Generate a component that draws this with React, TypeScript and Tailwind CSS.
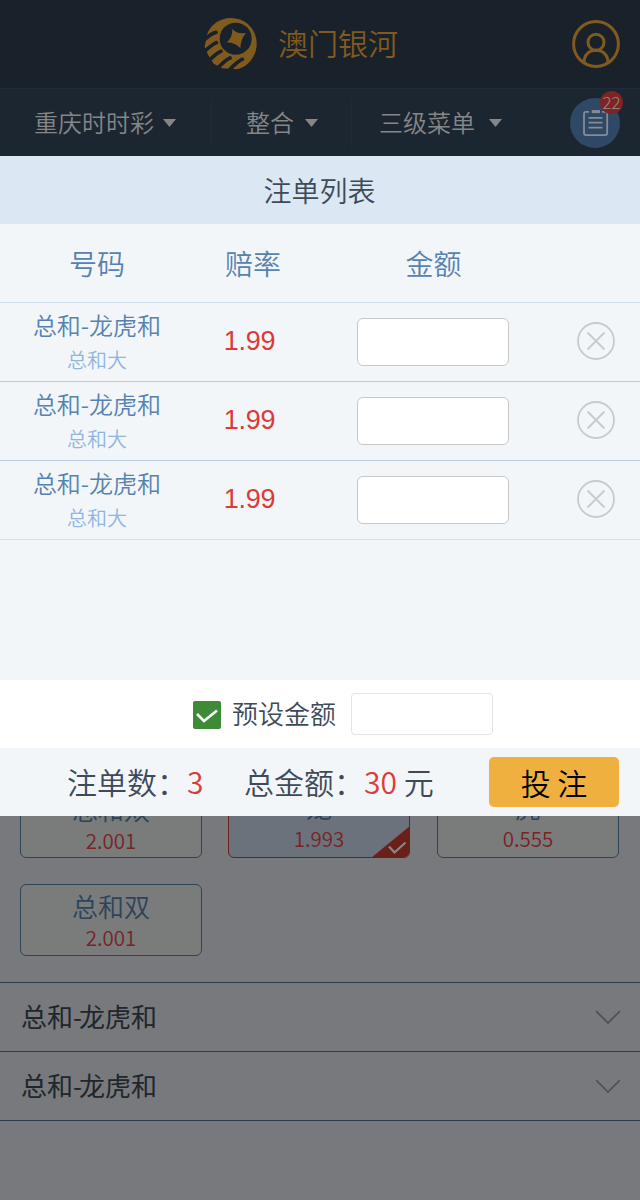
import React from "react";

const rows = [0, 1, 2];

function Logo() {
  return (
    <svg className="h-[54px] w-[55px] shrink-0" viewBox="40 50 165 162">
      <path
        d="M52 103C62 73 90 53 124 53C168 53 201 87 201 130C201 170 172 203 138 207L98 204L72 190L55 163L45 139Z"
        fill="#815a1d"
      />
      <circle cx="138" cy="115" r="48" fill="#19212a" />
      <path d="M128 86Q141 102 169 98Q153 116 152 144Q138 127 111 126Q129 112 128 86Z" fill="#815a1d" />
      <g stroke="#19212a" strokeWidth="11" strokeLinecap="round" fill="none">
        <path d="M79 96Q66 98 40 122" />
        <path d="M80 127Q70 131 42 155" />
        <path d="M94 153Q84 156 52 186" />
        <path d="M121 173Q108 177 76 212" />
        <path d="M158 177Q146 181 112 216" />
      </g>
    </svg>
  );
}

function UserIcon() {
  return (
    <svg className="h-12 w-12" viewBox="0 0 48 48" fill="none" stroke="#815a1d" strokeWidth="3">
      <circle cx="24" cy="24" r="22.4" />
      <circle cx="24" cy="22.300" r="8" />
      <path d="M12 42.500c0-7.500 5-12.200 12-12.200s12 4.700 12 12.200" />
    </svg>
  );
}

function Caret() {
  return (
    <svg className="mt-px h-2 w-[13px]" viewBox="0 0 13 8">
      <path d="M0 0h13L6.500 8z" fill="#878684" />
    </svg>
  );
}

function SlipButton() {
  return (
    <div className="relative h-[50px] w-[50px] rounded-full bg-[#2f4865]">
      <svg className="h-[50px] w-[50px]" viewBox="0 0 50 50" fill="none" stroke="#858c94" strokeWidth="1.8">
        <path d="M19 13.900h-3a2 2 0 0 0-2 2v19.200a2 2 0 0 0 2 2h19.200a2 2 0 0 0 2-2v-19.200a2 2 0 0 0-2-2H32" />
        <path d="M21.700 13.600h8.300" strokeWidth="3" />
        <path d="M18.500 19.800h14M18.500 24.700h14M18.500 29.700h14" />
      </svg>
      <span className="absolute -top-[7px] left-[30px] h-[23px] w-[23px] rounded-full bg-[#7d2424] text-center text-[17px] leading-[22px] font-light text-[#9a8a8b]">
        22
      </span>
    </div>
  );
}

function CloseIcon() {
  return (
    <svg className="h-[38px] w-[38px]" viewBox="0 0 38 38" fill="none" stroke="#c9cacb" strokeWidth="1.8">
      <circle cx="19" cy="19" r="18" />
      <path d="M10.500 10.500l17 17M27.500 10.500l-17 17" />
    </svg>
  );
}

function Check({ className, color }: { className: string; color: string }) {
  return (
    <svg className={className} viewBox="0 0 22 14" fill="none" stroke={color} strokeWidth="2.600">
      <path d="M1 5l7 7L21 1.500" />
    </svg>
  );
}

function OddsCard({
  name,
  odds,
  selected,
  padding,
}: {
  name: string;
  odds: string;
  selected?: boolean;
  padding: string;
}) {
  return (
    <div
      className={`relative flex h-[72px] w-[182px] flex-col items-center overflow-hidden rounded-md border ${
        selected ? "border-[#6d1f1b] bg-[#6b727b]" : "border-[#2d445c] bg-[#797c7b]"
      } ${padding}`}
    >
      <span className="text-[26px] leading-[31px] text-[#2c435c]">{name}</span>
      <span className="mt-px text-[20.5px] leading-[30px] text-[#782424]">{odds}</span>
      {selected && (
        <svg className="absolute -right-px -bottom-px h-8 w-[39px]" viewBox="0 0 39 32">
          <path d="M39 0V32H0Z" fill="#6a1f19" />
          <path d="M18 20.500l5.500 6L34.500 16.500" fill="none" stroke="#85888c" strokeWidth="2.200" />
        </svg>
      )}
    </div>
  );
}

function Selector({ label, className }: { label: string; className: string }) {
  return (
    <div className={`flex items-center ${className}`}>
      <span className="-mt-px text-[24px] leading-8">{label}</span>
      <Caret />
    </div>
  );
}

export default function App() {
  return (
    <div className="flex h-[1200px] w-[640px] flex-col overflow-hidden bg-[#77797c] font-['Noto_Sans_CJK_SC',sans-serif] font-[350] text-[#3d4a5a]">
      <header className="flex h-[88px] shrink-0 items-center bg-[#19212a] pl-[203px] pr-5">
        <Logo />
        <h1 className="-mt-1 ml-5 flex-1 text-[30px] leading-10 text-[#815a1d]">澳门银河</h1>
        <UserIcon />
      </header>

      <nav className="flex h-[68px] shrink-0 items-center border-t border-[#1f2b37] bg-[#1c2630] text-[#858687]">
        <Selector label="重庆时时彩" className="h-12 w-[212px] gap-[9px] border-r border-[#1f2c38] pl-[34px]" />
        <Selector label="整合" className="h-12 w-[140px] gap-[11px] border-r border-[#1f2c38] pl-[34px]" />
        <Selector label="三级菜单" className="h-12 w-[218px] gap-[14px] pl-[27px]" />
        <SlipButton />
      </nav>

      <main className="flex h-[660px] shrink-0 flex-col bg-[#f2f6f9]">
        <h2 className="flex h-[68px] items-center justify-center bg-[#dbe7f3] pr-px text-[28px]">注单列表</h2>
        <div className="flex h-[79px] items-center border-b border-[#cfdfed] text-[28px] text-[#5682b1]">
          <span className="w-[194px] text-center">号码</span>
          <span className="w-[118px] text-center">赔率</span>
          <span className="w-[243px] text-center">金额</span>
        </div>
        {rows.map((row) => (
          <div
            key={row}
            className={`flex h-[79px] items-center border-b ${row === 2 ? "border-[#d3dfe9]" : "border-[#bccbda]"}`}
          >
            <div className="-mt-0.5 flex w-[194px] flex-col items-center">
              <span className="text-[24px] leading-9 text-[#5682b1]">总和-龙虎和</span>
              <span className="text-[20px] leading-[33px] text-[#8fb5e0]">总和大</span>
            </div>
            <span className="-mt-px w-[111px] text-center font-['Liberation_Sans',sans-serif] text-[27px] font-normal tracking-[-0.2px] text-[#dd3a3a]">
              1.99
            </span>
            <input
              aria-label="金额"
              className="ml-[52px] h-12 w-[152px] rounded-md border border-[#c6c8ca] bg-white px-2 outline-none"
            />
            <button className="-mt-0.5 ml-[68px]" aria-label="删除">
              <CloseIcon />
            </button>
          </div>
        ))}
        <div className="flex-1" />
        <div className="flex h-[68px] items-center bg-white pl-[193px]">
          <span className="mt-0.5 flex h-7 w-7 items-center justify-center rounded-[2px] bg-[#3d8b37]">
            <Check className="mt-px h-[14px] w-[22px]" color="#ffffff" />
          </span>
          <span className="-mt-[3px] ml-[11px] text-[26px]">预设金额</span>
          <input
            aria-label="预设金额"
            className="ml-[15px] h-[42px] w-[142px] rounded border border-[#e2e4e6] bg-white px-2 outline-none"
          />
        </div>
        <div className="flex h-[68px] items-center pl-[67px] pr-[21px] text-[30px]">
          <span className="-mt-0.5 w-[177px] whitespace-pre">
            注单数：<span className="text-[#dd3a3a]">3</span>
          </span>
          <span className="-mt-0.5 flex-1">
            总金额：<span className="text-[#dd3a3a]">30</span> 元
          </span>
          <button className="h-[50px] w-[130px] rounded-[5px] bg-[#f0b040] leading-[46px] text-black">投 注</button>
        </div>
      </main>

      <section className="h-[166px] shrink-0 overflow-hidden">
        <div className="-mt-[30px] grid grid-cols-[208px_209px_182px] gap-y-[26px] pl-5">
          <OddsCard name="总和双" odds="2.001" padding="pt-[6px]" />
          <OddsCard name="龙" odds="1.993" selected padding="pt-[4px]" />
          <OddsCard name="虎" odds="0.555" padding="pt-[4px]" />
          <OddsCard name="总和双" odds="2.001" padding="pt-[5px]" />
        </div>
      </section>

      <section className="border-t border-[#2d3c4b]">
        {["first", "second"].map((key) => (
          <div key={key} className="flex h-[69px] items-center justify-between border-b border-[#2d3c4b] pl-[21px] pr-5">
            <span className="-mt-[3px] text-[26px] font-normal text-[#20262d]">
              总和<span className="mr-[-3px]">-</span>龙虎和
            </span>
            <svg className="h-[14px] w-6" viewBox="0 0 24 14" fill="none" stroke="#47525d" strokeWidth="1.700">
              <path d="M0 1l12 12L24 1" />
            </svg>
          </div>
        ))}
      </section>
    </div>
  );
}
